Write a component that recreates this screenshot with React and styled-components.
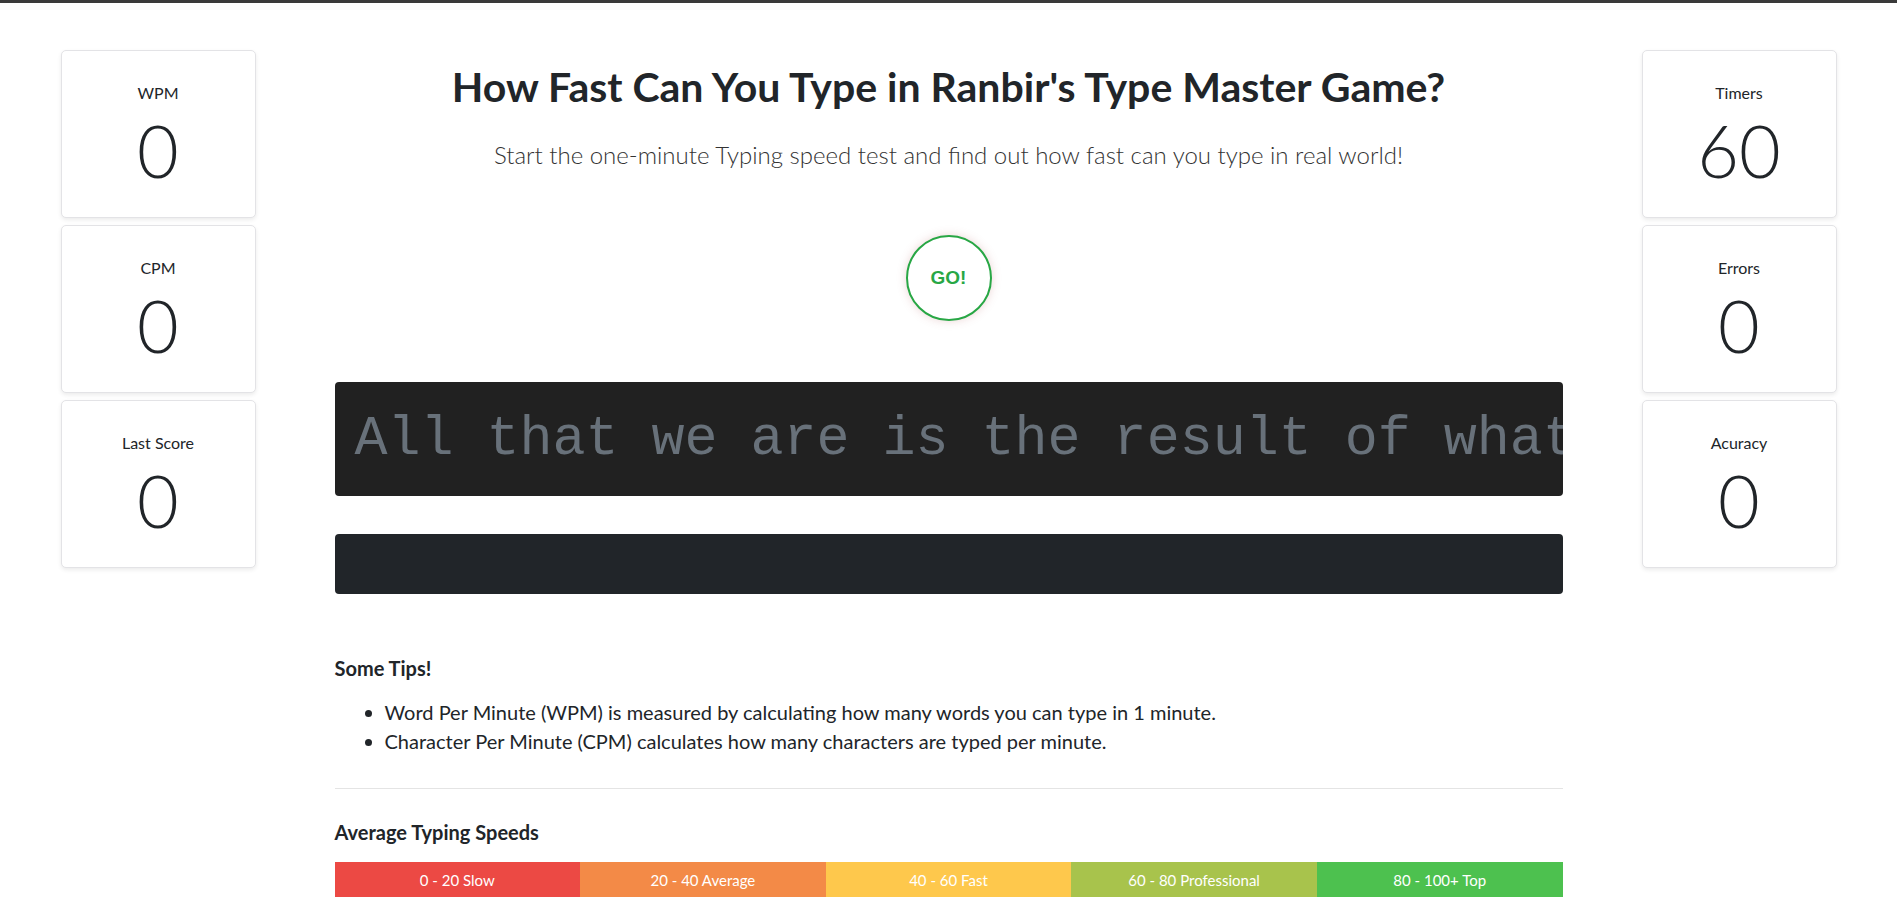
import React from 'react';
import styled, { createGlobalStyle } from 'styled-components';

const GlobalStyle = createGlobalStyle`
  body {
    margin: 0;
    background: #ffffff;
    font-family: Lato, "Open Sans", sans-serif;
    color: #212529;
    border-top: 3px solid #3a3a3a;
  }
`;

const Page = styled.div`
  display: grid;
  grid-template-columns: 316px 1fr 316px;
  min-height: 909px;
`;

const SideColumn = styled.div`
  display: flex;
  flex-direction: column;
  align-items: center;
  gap: 7px;
  padding-top: 47px;
`;

const StatCard = styled.div`
  width: 195px;
  height: 168px;
  box-sizing: border-box;
  border: 1px solid #e3e3e6;
  border-radius: 5px;
  box-shadow: 0 2px 4px rgba(0, 0, 0, 0.08);
  background: #fff;
  display: flex;
  flex-direction: column;
  align-items: center;
  padding-top: 30px;
`;

const StatLabel = styled.div`
  font-size: 16px;
  line-height: 24px;
`;

const StatValue = styled.div`
  font-size: 72px;
  font-weight: 300;
  line-height: 72px;
  margin-top: 9px;
`;

const Main = styled.main`
  width: 1228px;
  margin: 0 auto;
  display: flex;
  flex-direction: column;
`;

const Title = styled.h1`
  margin: 59px 0 0;
  font-size: 41px;
  font-weight: 700;
  line-height: 1.2;
  text-align: center;
`;

const Lead = styled.p`
  margin: 26px 0 0;
  font-size: 24px;
  font-weight: 300;
  line-height: 1.5;
  text-align: center;
  color: #333;
`;

const GoButton = styled.button`
  align-self: center;
  margin-top: 62px;
  width: 86px;
  height: 86px;
  border-radius: 50%;
  border: 2px solid #28a745;
  background: #fff;
  color: #28a745;
  font-family: "Liberation Sans", Arial, sans-serif;
  font-weight: 700;
  font-size: 19px;
  box-shadow: 0 0 10px rgba(180, 90, 90, 0.25);
  cursor: pointer;
`;

const Quote = styled.div`
  margin-top: 61px;
  height: 114px;
  background: #212121;
  border-radius: 4px;
  overflow: hidden;
  white-space: nowrap;
  display: flex;
  align-items: center;
  padding: 0 20px;
  font-family: "Liberation Mono", "Courier New", monospace;
  font-size: 55px;
  color: #68717a;
`;

const TypeInput = styled.textarea`
  margin-top: 38px;
  height: 60px;
  box-sizing: border-box;
  background: #212529;
  border: none;
  border-radius: 4px;
  resize: none;
  outline: none;
  color: #fff;
  padding: 12px 20px;
  font-family: "Liberation Mono", monospace;
  font-size: 20px;
`;

const SectionTitle = styled.h5`
  margin: ${(p) => p.$top}px 0 0;
  font-size: 20px;
  font-weight: 700;
  line-height: 24px;
`;

const TipList = styled.ul`
  margin: 18px 0 0;
  padding-left: 50px;
  font-size: 20px;
  line-height: 29px;
`;

const Divider = styled.hr`
  margin: 32px 0 0;
  border: none;
  border-top: 1px solid #e4e4e4;
`;

const SpeedBar = styled.div`
  margin-top: 18px;
  display: grid;
  grid-template-columns: repeat(5, 1fr);
  height: 35px;
`;

const SpeedSegment = styled.div`
  background: ${(p) => p.$color};
  color: #fff;
  font-size: 15px;
  display: flex;
  align-items: center;
  justify-content: center;
`;

const leftStats = [
  { label: 'WPM', value: 0 },
  { label: 'CPM', value: 0 },
  { label: 'Last Score', value: 0 },
];

const rightStats = [
  { label: 'Timers', value: 60 },
  { label: 'Errors', value: 0 },
  { label: 'Acuracy', value: 0 },
];

const speeds = [
  { text: '0 - 20 Slow', color: '#ec4944' },
  { text: '20 - 40 Average', color: '#f38a47' },
  { text: '40 - 60 Fast', color: '#fec84c' },
  { text: '60 - 80 Professional', color: '#a8c34c' },
  { text: '80 - 100+ Top', color: '#4dc14f' },
];

const Stats = ({ items }) => (
  <SideColumn>
    {items.map((s) => (
      <StatCard key={s.label}>
        <StatLabel>{s.label}</StatLabel>
        <StatValue>{s.value}</StatValue>
      </StatCard>
    ))}
  </SideColumn>
);

const App = () => (
  <>
    <GlobalStyle />
    <Page>
      <Stats items={leftStats} />
      <Main>
        <Title>How Fast Can You Type in Ranbir's Type Master Game?</Title>
        <Lead>Start the one-minute Typing speed test and find out how fast can you type in real world!</Lead>
        <GoButton>GO!</GoButton>
        <Quote>All that we are is the result of what we have thought.</Quote>
        <TypeInput />
        <SectionTitle $top={62}>Some Tips!</SectionTitle>
        <TipList>
          <li>Word Per Minute (WPM) is measured by calculating how many words you can type in 1 minute.</li>
          <li>Character Per Minute (CPM) calculates how many characters are typed per minute.</li>
        </TipList>
        <Divider />
        <SectionTitle $top={31}>Average Typing Speeds</SectionTitle>
        <SpeedBar>
          {speeds.map((s) => (
            <SpeedSegment key={s.text} $color={s.color}>{s.text}</SpeedSegment>
          ))}
        </SpeedBar>
      </Main>
      <Stats items={rightStats} />
    </Page>
  </>
);

export default App;
